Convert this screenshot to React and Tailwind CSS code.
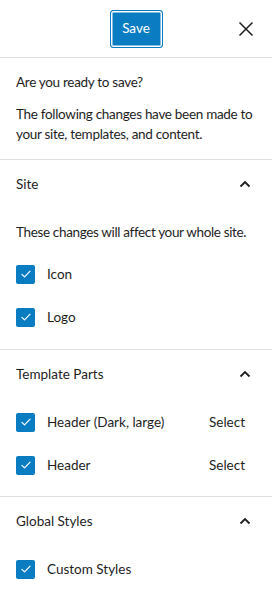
import React, { useState } from 'react';

const font = { fontFamily: 'Lato, "Noto Sans", sans-serif' };

const Check = () => (
  <span className="flex h-[19px] w-[19px] shrink-0 items-center justify-center rounded-[2px] bg-[#0a7cc1]">
    <svg width="14" height="14" viewBox="0 0 24 24" fill="none">
      <path d="M5 12.5l4.5 4.5L19 7" stroke="white" strokeWidth="2" strokeLinecap="round" strokeLinejoin="round" />
    </svg>
  </span>
);

const Chevron = () => (
  <svg width="24" height="24" viewBox="0 0 24 24" fill="none">
    <path d="M7.5 14.5L12 10l4.5 4.5" stroke="#1e1e1e" strokeWidth="1.8" />
  </svg>
);

const Item = ({ label, select }) => (
  <div className="flex h-5 items-center">
    <Check />
    <span className="ml-[12px] flex-1 text-[13.5px] text-[#1e1e1e]">{label}</span>
    {select && <span className="mr-[11px] text-[13.5px] text-[#1e1e1e]">Select</span>}
  </div>
);

const Panel = ({ title, children }) => {
  const [open, setOpen] = useState(true);
  return (
    <div className="border-b border-[#e0e0e0]">
      <button
        className="flex h-12 w-full items-center justify-between pl-4 pr-[15px] text-left text-[13.5px] text-[#1e1e1e]"
        onClick={() => setOpen(!open)}
      >
        <span>{title}</span>
        <Chevron />
      </button>
      {open && <div className="px-4">{children}</div>}
    </div>
  );
};

export default function App() {
  return (
    <div className="h-[600px] w-[272px] overflow-hidden bg-white" style={font}>
      {/* Header */}
      <div className="relative flex h-[58px] items-center justify-center border-b border-[#e0e0e0]">
        <button className="flex h-[38px] w-[53px] items-center justify-center rounded-[3px] border border-[#0a7cc1] bg-[#0a7cc1] text-[13.5px] text-white shadow-[inset_0_0_0_1.5px_white]">
          Save
        </button>
        <button className="absolute right-[8px] top-[11px] flex h-9 w-9 items-center justify-center">
          <svg width="24" height="24" viewBox="0 0 24 24" fill="none">
            <path d="M5.5 5.5l13 13M18.5 5.5l-13 13" stroke="#1e1e1e" strokeWidth="1.5" />
          </svg>
        </button>
      </div>

      {/* Intro */}
      <div className="border-b border-[#e0e0e0] px-4 pb-[15px] pt-[14px] text-[13.5px] leading-5 tracking-[-0.3px] text-[#1e1e1e]">
        <p>Are you ready to save?</p>
        <p className="mt-3">The following changes have been made to your site, templates, and content.</p>
      </div>

      <Panel title="Site">
        <p className="mt-[14px] whitespace-nowrap text-[13.5px] leading-5 tracking-[-0.35px] text-[#1e1e1e]">These changes will affect your whole site.</p>
        <div className="mt-[22px] flex flex-col gap-[23px] pb-[22px]">
          <Item label="Icon" />
          <Item label="Logo" />
        </div>
      </Panel>

      <Panel title="Template Parts">
        <div className="mt-[14px] flex flex-col gap-[23px] pb-[21px]">
          <Item label="Header (Dark, large)" select />
          <Item label="Header" select />
        </div>
      </Panel>

      <Panel title="Global Styles">
        <div className="mt-[14px] flex flex-col gap-[23px] pb-[21px]">
          <Item label="Custom Styles" />
        </div>
      </Panel>
    </div>
  );
}
